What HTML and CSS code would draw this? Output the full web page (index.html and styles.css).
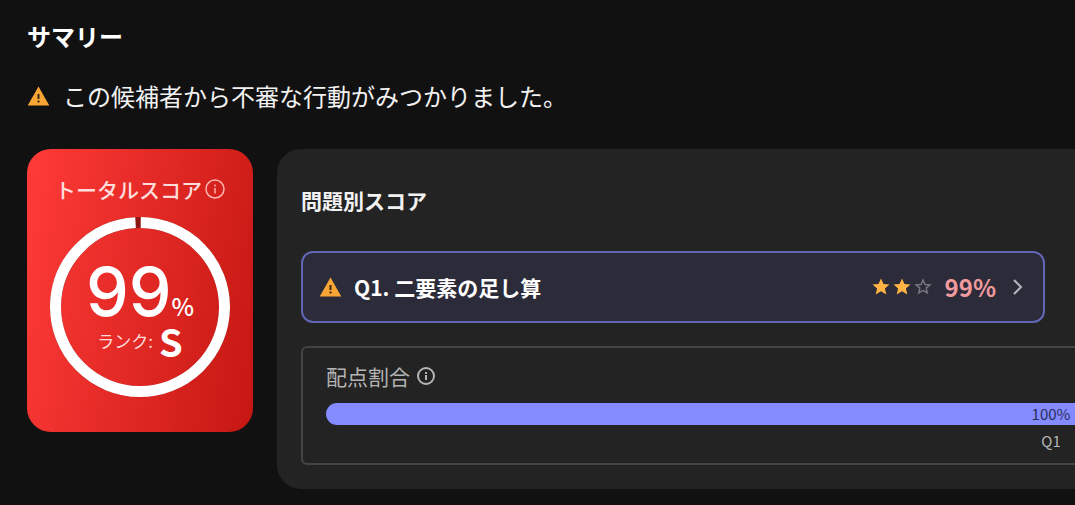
FILE: index.html
```html
<!DOCTYPE html>
<html lang="ja">
<head>
    <meta charset="UTF-8">
    <meta name="viewport" content="width=device-width, initial-scale=1.0">
    <title>サマリー</title>
    <link rel="stylesheet" href="styles.css">
</head>
<body>
<main class="summary">
    <h1 class="summary-title">サマリー</h1>

    <p class="alert">
        <svg class="icon-warning" viewBox="0 0 22 20" aria-hidden="true">
            <path class="warning-body" d="M11 0.5 21.8 19.5H0.2Z"/>
            <path class="warning-mark" d="M10 8h2v5h-2zM10 14.5h2v2h-2z"/>
        </svg>
        <span>この候補者から不審な行動がみつかりました。</span>
    </p>

    <div class="score-row">
        <!-- トータルスコア -->
        <section class="total-card">
            <h2 class="total-title">
                トータルスコア
                <svg class="icon-info" viewBox="0 0 20 20" aria-hidden="true">
                    <circle cx="10" cy="10" r="9"/>
                    <path d="M10 9v5.5M10 5.5v2"/>
                </svg>
            </h2>
            <div class="ring">
                <svg class="ring-svg" viewBox="0 0 180 180" aria-hidden="true">
                    <circle class="ring-track" cx="90" cy="90" r="84.5"/>
                    <circle class="ring-value" cx="90" cy="90" r="84.5" pathLength="100" transform="rotate(-89.500 90 90)"/>
                </svg>
                <div class="ring-text">
                    <div class="total-score">99<span class="total-unit">%</span></div>
                    <div class="rank">ランク:<strong class="rank-value">S</strong></div>
                </div>
            </div>
        </section>

        <!-- 問題別スコア -->
        <section class="detail-panel">
            <h2 class="detail-title">問題別スコア</h2>
            <div class="question-list">
                <a class="question" href="#">
                    <svg class="icon-warning" viewBox="0 0 22 20" aria-hidden="true">
                        <path class="warning-body" d="M11 0.5 21.8 19.5H0.2Z"/>
                        <path class="warning-mark" d="M10 8h2v5h-2zM10 14.5h2v2h-2z"/>
                    </svg>
                    <span class="question-name">Q1. 二要素の足し算</span>
                    <span class="stars">
                        <svg class="star star-on" viewBox="0 0 20 20" aria-hidden="true"><path d="M10 1.500l2.500 5.500 6 .5-4.600 4 1.400 6-5.300-3.200-5.300 3.200 1.400-6-4.600-4 6-.5z"/></svg>
                        <svg class="star star-on" viewBox="0 0 20 20" aria-hidden="true"><path d="M10 1.500l2.500 5.500 6 .5-4.600 4 1.400 6-5.300-3.200-5.300 3.200 1.400-6-4.600-4 6-.5z"/></svg>
                        <svg class="star" viewBox="0 0 20 20" aria-hidden="true"><path d="M10 3l2 4.500 4.900.4-3.700 3.200 1.100 4.800-4.300-2.600-4.300 2.600 1.100-4.800-3.700-3.200 4.900-.4z"/></svg>
                    </span>
                    <span class="question-score">99%</span>
                    <svg class="icon-chevron" viewBox="0 0 10 16" aria-hidden="true"><path d="M1 1l7 7-7 7"/></svg>
                </a>
            </div>

            <div class="weight">
                <h3 class="weight-title">
                    配点割合
                    <svg class="icon-info" viewBox="0 0 20 20" aria-hidden="true">
                        <circle cx="10" cy="10" r="8"/>
                        <path d="M10 9v5M10 6v2"/>
                    </svg>
                </h3>
                <div class="weight-bar">
                    <div class="weight-part" style="width: 100%">100%</div>
                </div>
                <div class="weight-labels">
                    <div class="weight-label" style="width: 100%">Q1</div>
                </div>
            </div>
        </section>
    </div>
</main>
</body>
</html>
```
FILE: styles.css
```css
:root {
    --bg: #111111;
    --panel: #232323;
    --text: #f2f2f2;
    --muted: #b4b4b4;
    --border: #444444;
    --accent: #838bff;
    --warning: #f9a535;
}

* {
    box-sizing: border-box;
}

body {
    margin: 0;
    background: var(--bg);
    color: var(--text);
    font-family: 'Noto Sans CJK JP', sans-serif;
    font-size: 21px;
    line-height: 32px;
}

h1, h2, h3, p {
    margin: 0;
    font-weight: 500;
}

svg {
    display: block;
    flex: none;
}

.summary {
    padding: 20px 0 16px 27px;
}

.summary-title {
    font-size: 24px;
    font-weight: 700;
    color: #ffffff;
}

.alert {
    display: flex;
    align-items: center;
    gap: 13px;
    margin-top: 28px;
    font-size: 24px;
    font-weight: 400;
}

.icon-warning {
    width: 23px;
    height: 20px;
}

.warning-body {
    fill: var(--warning);
}

.warning-mark {
    fill: #3a2a14;
}

.icon-info {
    width: 20px;
    height: 20px;
    fill: none;
    stroke: currentColor;
    stroke-width: 2;
}

.score-row {
    display: flex;
    align-items: flex-start;
    gap: 24px;
    margin-top: 37px;
    overflow: hidden;
}

/* トータルスコア */
.total-card {
    flex: none;
    padding: 24px 23px 35px;
    border-radius: 24px;
    background: linear-gradient(100deg, #ff3b38 0%, #c51712 100%);
}

.total-title {
    display: flex;
    align-items: center;
    justify-content: center;
    gap: 3px;
    font-size: 21px;
    color: #ffdcdb;
}

.total-title .icon-info {
    stroke-width: 1.5;
    color: #ffb3b0;
}

.ring {
    display: grid;
    width: 180px;
    margin: 12px auto 0;
}

.ring-svg,
.ring-text {
    grid-area: 1 / 1;
}

.ring-svg {
    width: 180px;
    height: 180px;
}

.ring-svg circle {
    fill: none;
    stroke-width: 11;
}

.ring-track {
    stroke: #8f1512;
}

.ring-value {
    stroke: #ffffff;
    stroke-dasharray: 99 1;
}

.ring-text {
    display: flex;
    flex-direction: column;
    align-items: center;
    padding-top: 44px;
    color: #ffffff;
}

.total-score {
    display: flex;
    align-items: baseline;
    height: 60px;
    font-family: 'Inter', 'Noto Sans CJK JP', sans-serif;
    font-size: 68px;
    font-weight: 500;
    line-height: 60px;
}

.total-unit {
    font-family: 'Noto Sans CJK JP', sans-serif;
    font-size: 24px;
}

.rank {
    display: flex;
    align-items: center;
    gap: 6px;
    height: 40px;
    font-size: 17px;
    line-height: 40px;
    color: #ffdcdb;
}

.rank-value {
    font-size: 38px;
    font-weight: 700;
    color: #ffffff;
}

/* 問題別スコア */
.detail-panel {
    flex: 1 0 1548px;
    padding: 35px 24px 24px;
    border-radius: 24px;
    background: var(--panel);
}

.detail-title {
    font-size: 21px;
    font-weight: 700;
}

.question-list {
    display: grid;
    grid-template-columns: 1fr 1fr;
    gap: 12px;
    margin-top: 35px;
}

.question {
    display: flex;
    align-items: center;
    padding: 18px 20px 18px 16px;
    border: 2px solid #6166b5;
    border-radius: 12px;
    background: #2c2b39;
    color: #ffffff;
    font-weight: 700;
    text-decoration: none;
}

.question-name {
    margin-left: 12px;
}

.stars {
    display: flex;
    gap: 1px;
    margin-left: auto;
}

.star {
    width: 20px;
    height: 20px;
    fill: none;
    stroke: #77767f;
    stroke-width: 1.5;
}

.star-on {
    fill: #ffb443;
    stroke: none;
}

.question-score {
    margin-left: 12px;
    font-size: 24px;
    font-weight: 700;
    color: #f09a9d;
}

.icon-chevron {
    width: 10px;
    height: 16px;
    margin-left: 17px;
    fill: none;
    stroke: #b4b4bb;
    stroke-width: 2;
}

.weight {
    margin-top: 23px;
    padding: 12px 23px 10px;
    border: 2px solid var(--border);
    border-radius: 6px;
}

.weight-title {
    display: flex;
    align-items: center;
    gap: 6px;
    font-size: 21px;
    font-weight: 400;
    line-height: 32px;
    color: var(--muted);
}

.weight-bar {
    display: flex;
    margin-top: 11px;
    border-radius: 11px;
    background: var(--border);
    overflow: hidden;
}

.weight-part {
    background: var(--accent);
    color: #2b2d5c;
    font-size: 15px;
    line-height: 22px;
    text-align: center;
}

.weight-labels {
    display: flex;
    margin-top: 4px;
}

.weight-label {
    color: var(--muted);
    font-size: 15px;
    line-height: 24px;
    text-align: center;
}
```
